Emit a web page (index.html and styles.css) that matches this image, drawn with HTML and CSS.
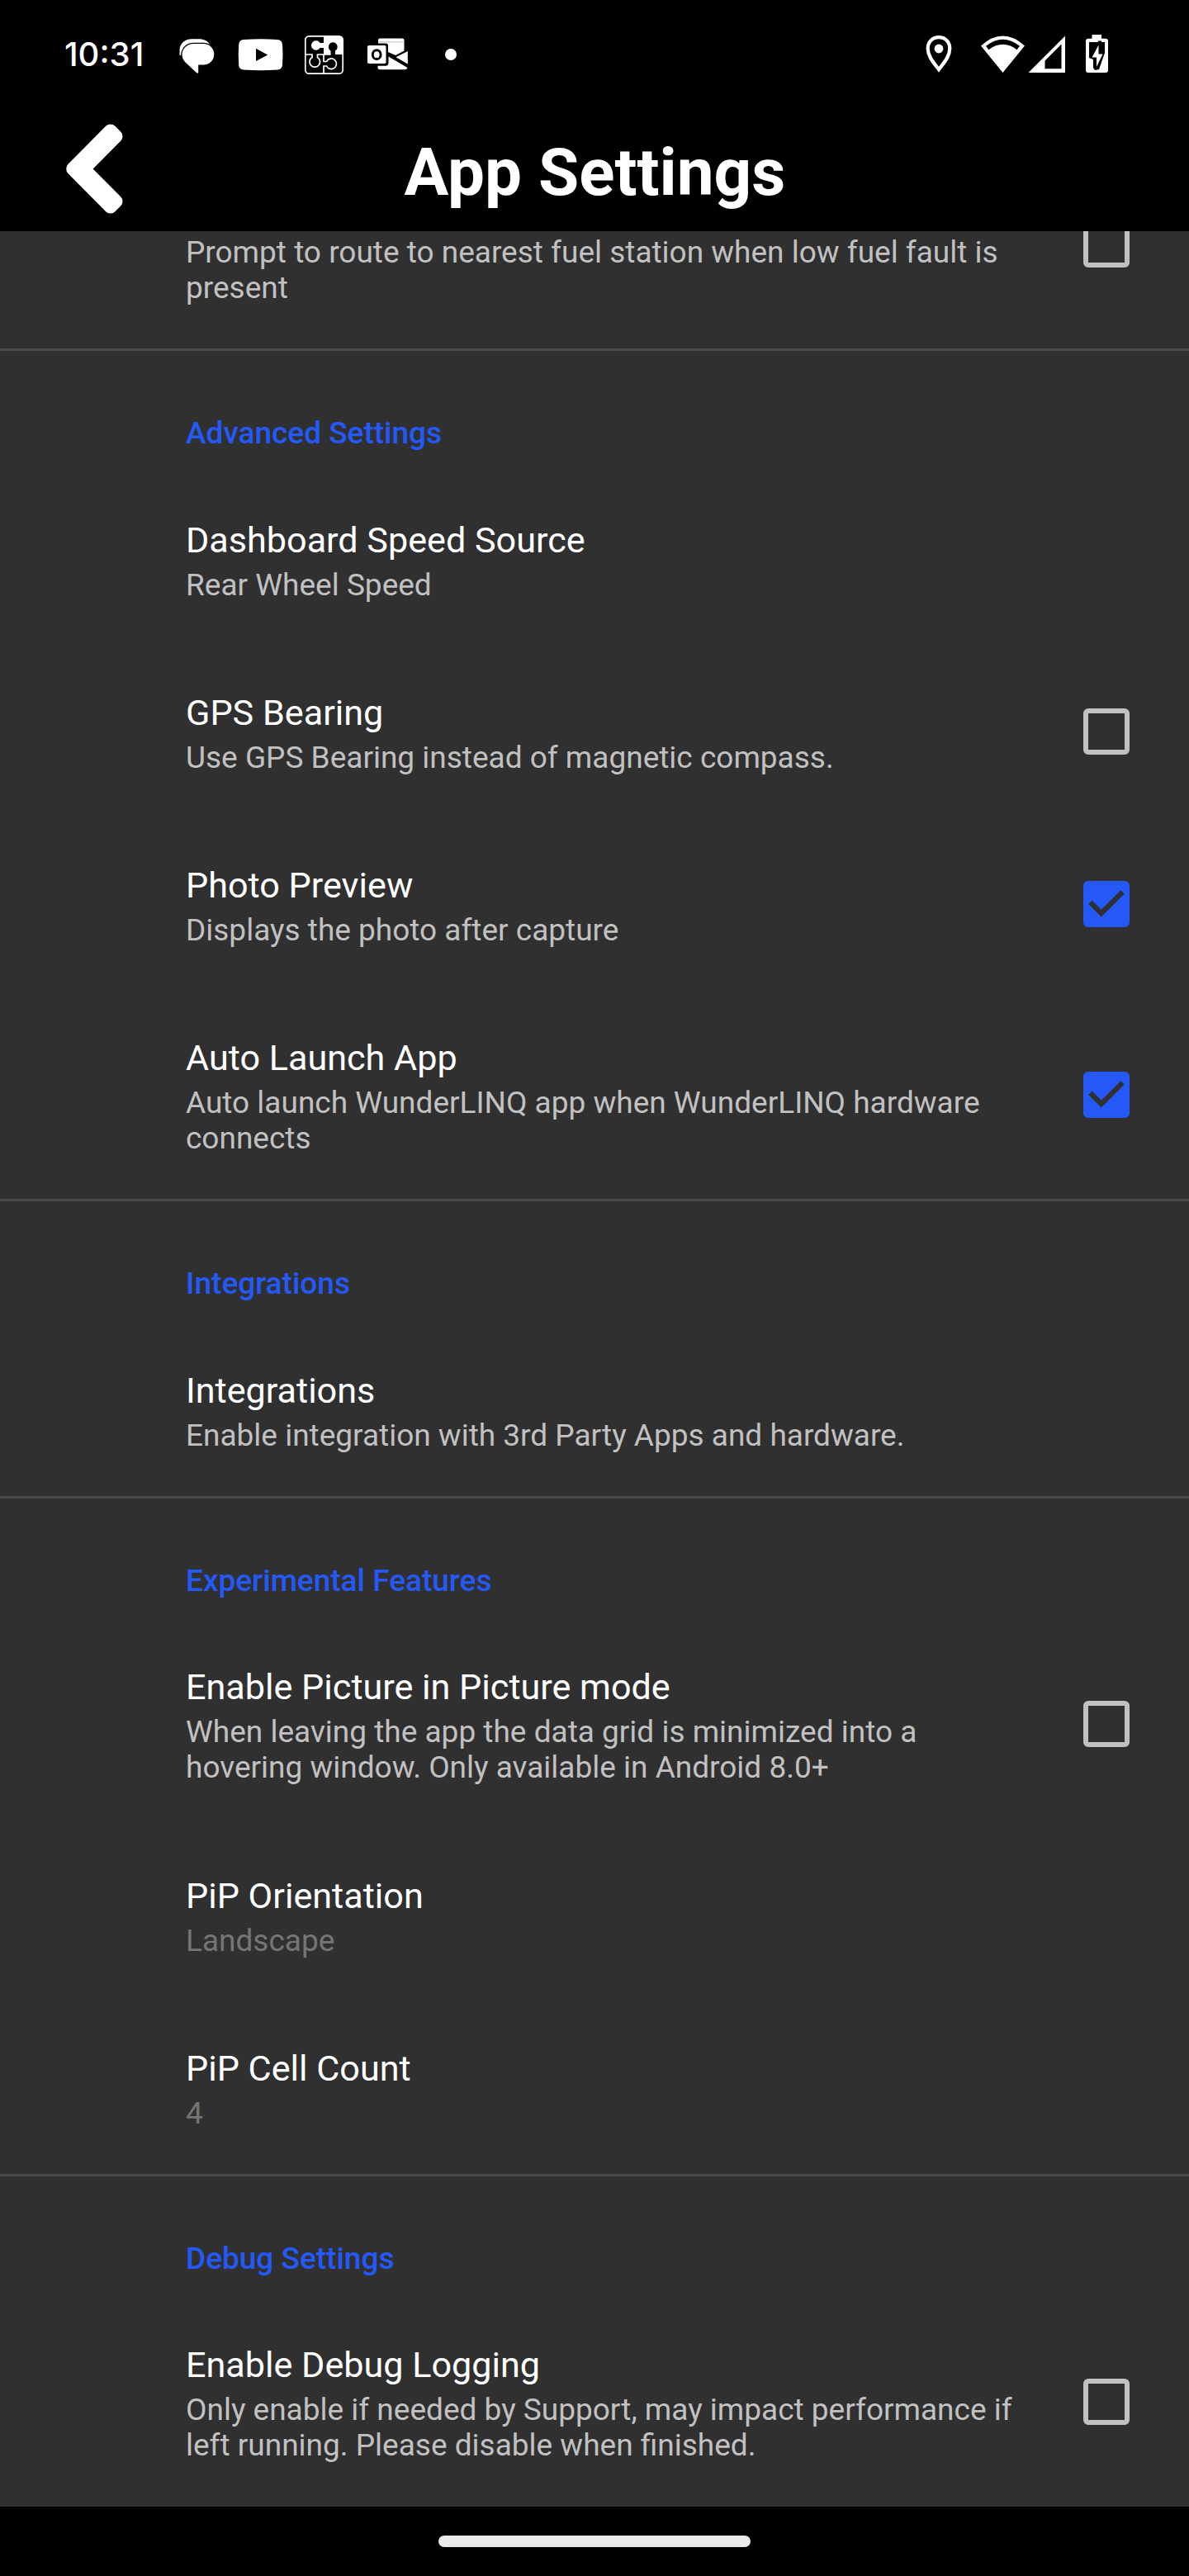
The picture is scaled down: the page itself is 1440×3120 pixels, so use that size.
FILE: index.html
```html
<!DOCTYPE html>
<html lang="en">
<head>
<meta charset="utf-8">
<title>App Settings</title>
<link rel="stylesheet" href="styles.css">
</head>
<body>
<header class="top">
  <div class="status">
    <span class="clock">10:31</span>
    <svg class="notifications" width="350" height="60" viewBox="210 36 350 60" fill="#fff">
      <path d="M217.500 67V61C217.500 53 224 47.300 232 47.300H241C247 47.300 251.500 49.500 254 54L240 70L219 67Z"/>
      <path d="M234.500 53H246.500A12.800 12.800 0 0 1 246.500 78.600H240.200V88.500L238.500 88.500L224.500 75.500C216 67 222 53 234.500 53Z" stroke="#000" stroke-width="2.400" paint-order="stroke"/>
      <path d="M295 48Q315.500 46.500 336 48Q341.500 48.500 342 54Q343 66 342 79Q341.500 84 336 84.500Q315.500 86 295 84.500Q289.500 84 289.200 79Q288.200 66 289.200 54Q289.500 48.500 295 48Z"/>
      <path d="M310 58.800L324.300 66.400L310 74Z" fill="#000"/>
      <rect x="369.800" y="43.800" width="45.400" height="45.400" rx="4.500" fill="#000" stroke="#fff" stroke-width="1.700"/>
      <path d="M392 44H411Q415 44 415 48V66H406V61.500A5.500 5.500 0 1 0 400.500 61.500V66H392V58H387.500A5.700 5.700 0 1 1 387.500 52H392Z"/>
      <path d="M370 66H378V69.500A6.300 6.300 0 1 0 384.500 69.500V66H400.500M392 66V74.500H395.500A6.300 6.300 0 1 1 395.500 80H392V89" fill="none" stroke="#fff" stroke-width="1.700"/>
      <path d="M458 48.500Q458 46.500 460 46.500H487Q489.500 46.500 489.500 48.500V61.500L479 67L470 63V55Q470 52.500 467 52.500H458Z"/>
      <path d="M458 50.800H489.500" stroke="#aaa" stroke-width=".8"/>
      <path d="M493.800 62V77.500L479.500 69.200ZM470.500 68.500L493.500 82Q493 84 491 84.200H460Q457.500 84.200 457.500 81V79.700H467Q470.500 79.700 470.500 76Z"/>
      <rect x="445" y="55" width="22.500" height="22" rx="1.800"/>
      <ellipse cx="456.200" cy="66.200" rx="4.900" ry="5.400" fill="none" stroke="#000" stroke-width="3"/>
      <circle cx="546" cy="66" r="7"/>
    </svg>
    <svg class="system" width="230" height="60" viewBox="1118 36 230 60" fill="#fff">
      <path d="M1137 45.200C1129.300 45.200 1123.700 51 1123.700 58.500C1123.700 68 1130 75 1137 84.200C1144 75 1150.300 68 1150.300 58.500C1150.300 51 1144.700 45.200 1137 45.200Z" fill="none" stroke="#fff" stroke-width="4.200"/>
      <circle cx="1137" cy="59" r="5.400"/>
      <path d="M1188 55.500Q1214.500 31.500 1241 55.500L1214.500 88Z"/>
      <path d="M1194 55.800Q1214.500 39.700 1235 55.800L1231.500 60.200Q1214.500 47.500 1197.500 60.200Z" fill="#000"/>
      <path fill-rule="evenodd" d="M1245.500 88L1290 43.500V88ZM1265.500 73.500V83.200H1285.500V53.500Z"/>
      <path d="M1322.500 42H1334V46.700H1339Q1342 46.700 1342 50V85Q1342 88 1339 88H1318Q1315 88 1315 85V50Q1315 46.700 1318 46.700H1322.500Z"/>
      <path d="M1319 51H1329L1330.500 49.500H1334V51H1338V64L1331 84L1326 85L1324 82V72L1319 70Z" fill="#000"/>
      <path d="M1330.500 54.500V65.500H1335.500L1328 81V69.500H1322.500Z"/>
    </svg>
  </div>
  <div class="appbar">
    <svg class="back" width="72" height="112" viewBox="78 149 72 112"><path d="M133.800 158.500L140.500 165.200L101.200 204.500L140.500 243.800L133.800 250.500L88.200 204.500Z" fill="#fff" stroke="#fff" stroke-width="16" stroke-linejoin="round"/></svg>
    <h1>App Settings</h1>
  </div>
</header>
<main>
  <section class="group scrolled">
    <div class="row two"><div class="copy untitled"><p>Prompt to route to nearest fuel station when low fuel fault is present</p></div><span class="box"></span></div>
  </section>
  <section class="group">
    <h2>Advanced Settings</h2>
    <div class="row"><div class="copy"><h3>Dashboard Speed Source</h3><p>Rear Wheel Speed</p></div></div>
    <div class="row"><div class="copy"><h3>GPS Bearing</h3><p>Use GPS Bearing instead of magnetic compass.</p></div><span class="box"></span></div>
    <div class="row"><div class="copy"><h3>Photo Preview</h3><p>Displays the photo after capture</p></div><span class="box on"><svg viewBox="3 3 18 18"><path d="M10 17l-5-5 1.410-1.410L10 14.170l7.590-7.590L19 8z"/></svg></span></div>
    <div class="row two"><div class="copy"><h3>Auto Launch App</h3><p>Auto launch WunderLINQ app when WunderLINQ hardware connects</p></div><span class="box on"><svg viewBox="3 3 18 18"><path d="M10 17l-5-5 1.410-1.410L10 14.170l7.590-7.590L19 8z"/></svg></span></div>
  </section>
  <section class="group">
    <h2>Integrations</h2>
    <div class="row"><div class="copy"><h3>Integrations</h3><p>Enable integration with 3rd Party Apps and hardware.</p></div></div>
  </section>
  <section class="group">
    <h2>Experimental Features</h2>
    <div class="row two"><div class="copy"><h3>Enable Picture in Picture mode</h3><p>When leaving the app the data grid is minimized into a hovering window. Only available in Android 8.0+</p></div><span class="box"></span></div>
    <div class="row disabled"><div class="copy"><h3>PiP Orientation</h3><p>Landscape</p></div></div>
    <div class="row disabled"><div class="copy"><h3>PiP Cell Count</h3><p>4</p></div></div>
  </section>
  <section class="group">
    <h2>Debug Settings</h2>
    <div class="row two"><div class="copy"><h3>Enable Debug Logging</h3><p>Only enable if needed by Support, may impact performance if left running. Please disable when finished.</p></div><span class="box"></span></div>
  </section>
</main>
<footer class="nav"><span class="pill"></span></footer>
</body>
</html>
```
FILE: styles.css
```css
* { box-sizing: border-box; }
body { margin: 0; width: 1440px; height: 3120px; display: flex; flex-direction: column; overflow: hidden; background: #303030; color: #fff; font-family: Roboto, sans-serif; }
.top { flex: none; height: 280px; background: #000; }
.status { height: 132px; padding: 0 92px 0 78px; display: flex; align-items: center; }
.clock { width: 132px; font: 500 40px/60px Inter, sans-serif; white-space: nowrap; }
.notifications, .system { flex: none; display: block; }
.system { margin-left: auto; }
.appbar { height: 148px; display: grid; grid-template-columns: 1fr auto 1fr; align-items: start; padding: 0 77px 0 78px; }
.back { margin-top: 17px; display: block; }
h1 { margin: 29px 0 0; font-size: 80px; line-height: 96px; font-weight: 700; }
main { flex: none; height: 2756px; overflow: hidden; }
.group { border-top: 3px solid #4b4b4b; }
.scrolled { height: 142px; border-top: 0; display: flex; flex-direction: column; justify-content: flex-end; overflow: hidden; }
h2 { height: 147.500px; margin: 0; padding: 78px 0 0 225px; color: #2459f7; font-size: 37px; line-height: 44px; font-weight: 500; }
.row { flex: none; height: 209px; padding: 0 72px 0 225px; display: flex; align-items: center; justify-content: space-between; }
.two { height: 252.500px; }
.copy { flex: none; width: 1010px; padding-top: 5.200px; }
.untitled { padding-top: 63px; }
h3 { margin: 0 0 7px; font-size: 43.150px; line-height: 50px; font-weight: 400; }
p { margin: 0; color: #c1c1c1; font-size: 37px; line-height: 43px; }
.disabled p { color: #757575; }
.box { flex: none; width: 56px; height: 56px; border: 6px solid #c1c1c1; border-radius: 6px; }
.on { border: 0; background: #2459f7; }
.on svg { display: block; width: 56px; height: 56px; fill: #303030; }
.nav { flex: none; height: 84px; background: #000; display: flex; justify-content: center; padding-top: 35px; }
.pill { width: 378px; height: 14px; border-radius: 7px; background: #ebebeb; }
```
